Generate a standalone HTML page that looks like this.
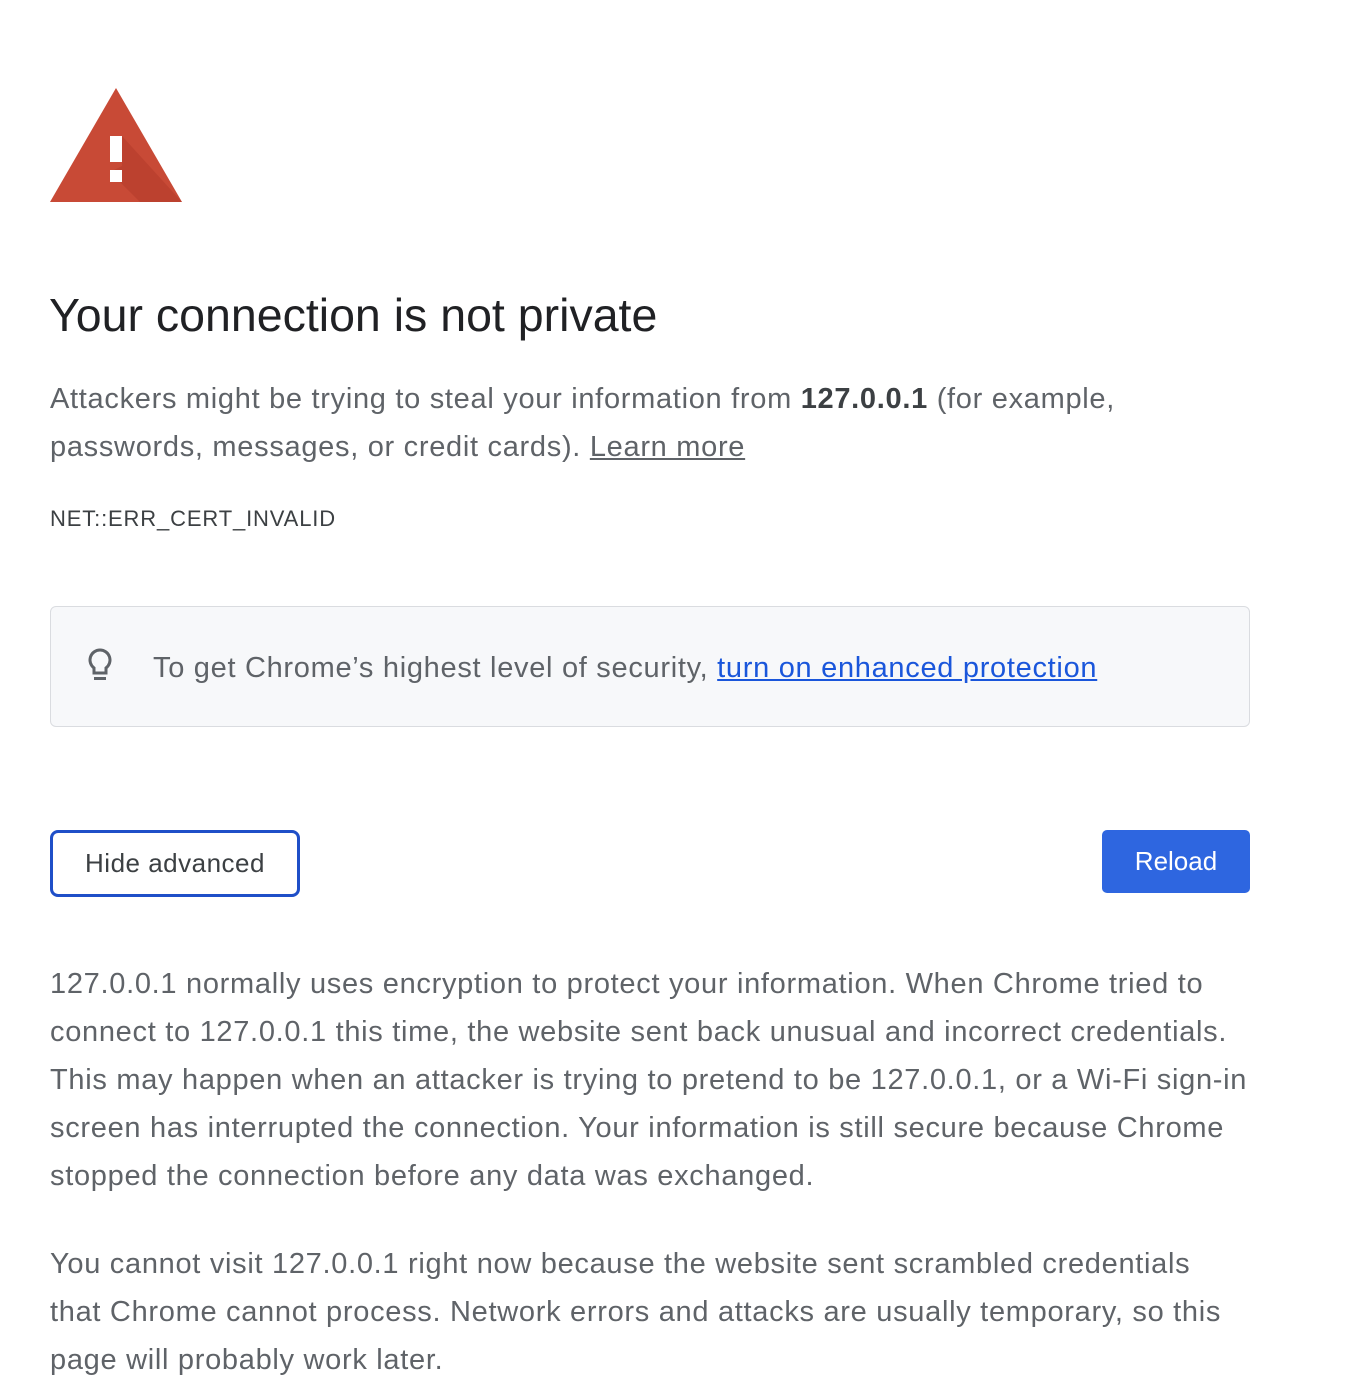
<!DOCTYPE html>
<html><head><meta charset="utf-8"><style>
body{margin:0;width:1364px;height:1394px;background:#fff;font-family:"Liberation Sans",sans-serif;position:relative;overflow:hidden}
.l{position:absolute;left:50px;white-space:nowrap;color:#5f6368;font-size:29px;letter-spacing:0.7px;line-height:48px}
h1{position:absolute;left:49px;top:285px;margin:0;font-weight:normal;font-size:46.5px;line-height:60px;color:#202124;letter-spacing:0;white-space:nowrap}
a{color:#5f6368;text-decoration:underline}
.box{position:absolute;left:50px;top:606px;width:1198px;height:119px;background:#f7f8fa;border:1px solid #dadce0;border-radius:6px}
.btn1{position:absolute;left:50px;top:830px;width:244px;height:61px;border:3px solid #1f4fc8;border-radius:8px;font-size:26px;color:#3c4043;text-align:center;line-height:61px;letter-spacing:0.5px}
.btn2{position:absolute;left:1102px;top:830px;width:148px;height:63px;background:#2e66e0;border-radius:5px;font-size:26px;color:#fff;text-align:center;line-height:63px}
</style></head><body>
<svg style="position:absolute;left:50px;top:88px" width="132" height="114" viewBox="0 0 132 114">
<polygon points="66,0 132,114 0,114" fill="#c84a36"/>
<polygon points="72,48 132,114 90,114 60,84 72,78" fill="#b43c2c" opacity="0.6"/>
<rect x="60" y="48" width="12" height="26" fill="#fff"/>
<rect x="60" y="82" width="12" height="12" fill="#fff"/>
</svg>
<h1>Your connection is not private</h1>
<div class="l" style="top:375px">Attackers might be trying to steal your information from <b style="color:#3c4043">127.0.0.1</b> (for example,</div>
<div class="l" style="top:423px">passwords, messages, or credit cards). <a>Learn more</a></div>
<div class="l" style="top:505px;font-size:22px;letter-spacing:0.85px;line-height:28px;color:#3c4043">NET::ERR_CERT_INVALID</div>
<div class="box"></div>
<svg style="position:absolute;left:86px;top:647px" width="28" height="38" viewBox="0 0 28 38"><path d="M14 3a10 10 0 0 0-6 18v5h12v-5a10 10 0 0 0-6-18z" fill="none" stroke="#5f6368" stroke-width="3"/><rect x="8" y="30" width="12" height="3" fill="#5f6368"/></svg>
<div class="l" style="left:153px;top:644px">To get Chrome’s highest level of security, <a style="color:#1a56db">turn on enhanced protection</a></div>
<div class="btn1">Hide advanced</div>
<div class="btn2">Reload</div>
<div class="l" style="top:960px">127.0.0.1 normally uses encryption to protect your information. When Chrome tried to</div>
<div class="l" style="top:1008px">connect to 127.0.0.1 this time, the website sent back unusual and incorrect credentials.</div>
<div class="l" style="top:1056px">This may happen when an attacker is trying to pretend to be 127.0.0.1, or a Wi-Fi sign-in</div>
<div class="l" style="top:1104px">screen has interrupted the connection. Your information is still secure because Chrome</div>
<div class="l" style="top:1152px">stopped the connection before any data was exchanged.</div>
<div class="l" style="top:1240px">You cannot visit 127.0.0.1 right now because the website sent scrambled credentials</div>
<div class="l" style="top:1288px">that Chrome cannot process. Network errors and attacks are usually temporary, so this</div>
<div class="l" style="top:1336px">page will probably work later.</div>
</body></html>
